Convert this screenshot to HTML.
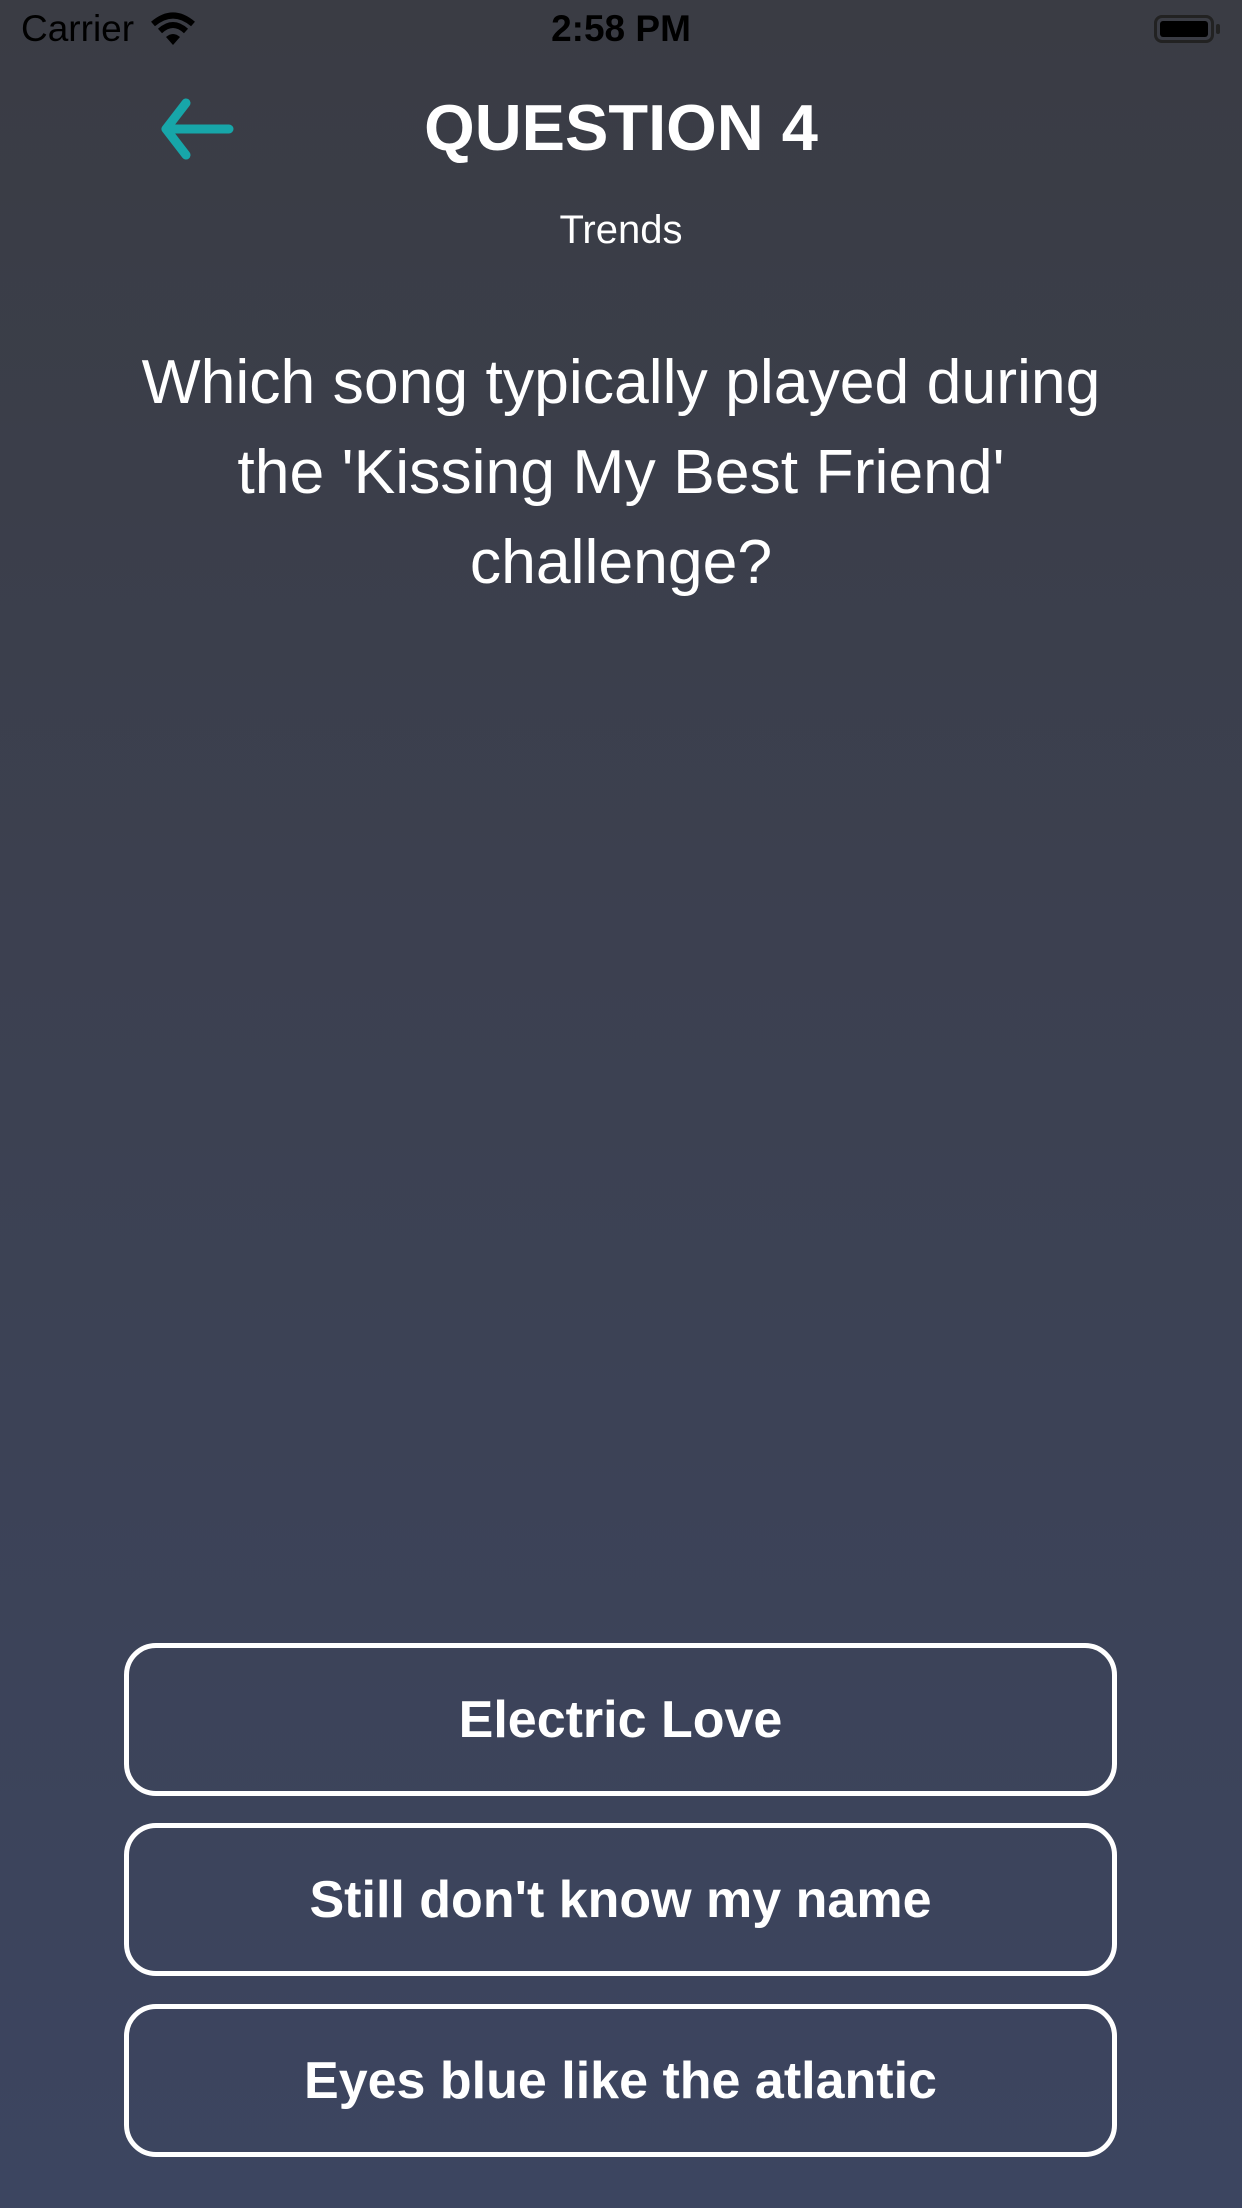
<!DOCTYPE html>
<html><head><meta charset="utf-8"><style>
html,body{margin:0;padding:0}
body{width:1242px;height:2208px;position:relative;overflow:hidden;background:linear-gradient(180deg,#3a3c44 0%,#3c4152 50%,#3c4560 100%);font-family:"Liberation Sans",sans-serif;color:#fff}
.sb{position:absolute;top:8px;font-size:37px;color:#000}
.title{position:absolute;top:90px;left:0;width:1242px;text-align:center;font-weight:bold;font-size:65px}
.sub{position:absolute;top:208px;left:0;width:1242px;text-align:center;font-size:40px}
.q{position:absolute;top:337px;left:0;width:1242px;text-align:center;font-size:62.5px;line-height:90px}
.btn{position:absolute;left:124px;width:983px;height:143px;border:5.5px solid #fff;border-radius:32px;display:flex;align-items:center;justify-content:center;font-weight:bold;font-size:52px}
</style></head><body>
<div class="sb" style="left:21px">Carrier</div>
<svg style="position:absolute;left:150px;top:12px" width="46" height="36" viewBox="0 0 46 36"><path d="M3 12 Q23 -5 43 12" stroke="#000" stroke-width="6" fill="none"/><path d="M10 19 Q23 7 36 19" stroke="#000" stroke-width="6" fill="none"/><path d="M16 25 L23 33 L30 25 Q23 19 16 25Z" fill="#000"/></svg>
<div class="sb" style="left:0;width:1242px;text-align:center;font-weight:bold">2:58 PM</div>
<div style="position:absolute;left:1154px;top:15px;width:60px;height:28px;border:3px solid #222;border-radius:8px;box-sizing:border-box;padding:3px"><div style="background:#000;width:100%;height:100%;border-radius:3px"></div></div>
<div style="position:absolute;left:1216px;top:24px;width:4px;height:10px;background:#222;border-radius:2px"></div>
<svg style="position:absolute;left:156px;top:98px" width="80" height="62" viewBox="0 0 80 62"><path d="M73 31 H10 M30 5 L10 31 L30 57" stroke="#17a6a9" stroke-width="9" stroke-linecap="round" stroke-linejoin="round" fill="none"/></svg>
<div class="title">QUESTION 4</div>
<div class="sub">Trends</div>
<div class="q">Which song typically played during<br>the 'Kissing My Best Friend'<br>challenge?</div>
<div class="btn" style="top:1643px">Electric Love</div>
<div class="btn" style="top:1823px">Still don't know my name</div>
<div class="btn" style="top:2004px">Eyes blue like the atlantic</div>
</body></html>
